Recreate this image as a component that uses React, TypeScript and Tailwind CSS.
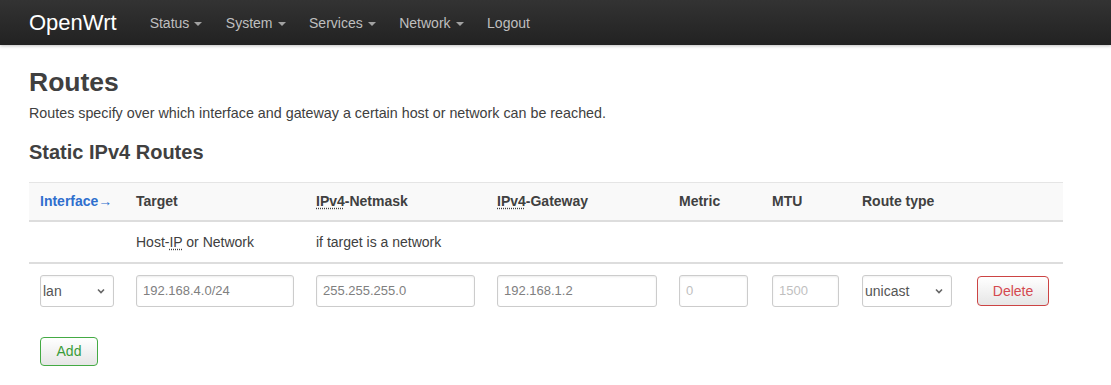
import React from "react";

const font = { fontFamily: '"Liberation Sans", Arial, sans-serif' };

function Caret() {
  return (
    <span className="ml-[5px] inline-block h-0 w-0 border-x-[4px] border-t-[4px] border-x-transparent border-t-[#bfbfbf] align-middle opacity-80" />
  );
}

function Chevron() {
  return (
    <svg width="10" height="10" viewBox="0 0 10 10" className="shrink-0">
      <path d="M2 3.5 L5 6.5 L8 3.5" fill="none" stroke="#666" strokeWidth="1.6" />
    </svg>
  );
}

function Select({ value }: { value: string }) {
  return (
    <div className="flex h-[32px] w-full items-center justify-between rounded-[3px] border border-[#ccc] bg-white pl-[2px] pr-[7px] text-[14px] text-[#555] shadow-[inset_0_1px_2px_rgba(0,0,0,0.05)]">
      <span>{value}</span>
      <Chevron />
    </div>
  );
}

function Input({ value, placeholder }: { value?: string; placeholder?: string }) {
  return (
    <div className="flex h-[32px] w-full items-center rounded-[3px] border border-[#ccc] bg-white px-[6px] text-[13px] shadow-[inset_0_1px_2px_rgba(0,0,0,0.08)]">
      {value ? (
        <span className="text-[#808080]">{value}</span>
      ) : (
        <span className="text-[#bfbfbf]">{placeholder}</span>
      )}
    </div>
  );
}

function Abbr({ children }: { children: React.ReactNode }) {
  return <span className="underline decoration-dotted decoration-[#404040] underline-offset-[2px]">{children}</span>;
}

export default function App() {
  const cols = "grid grid-cols-[96px_180px_181px_182px_93px_90px_115px_97px]";
  return (
    <div className="min-h-[385px] bg-white text-[#404040]" style={font}>
      <div className="flex h-[45px] items-center bg-gradient-to-b from-[#333] to-[#222] pl-[29px] shadow-[0_1px_3px_rgba(0,0,0,0.25)]">
        <span className="text-[22px] leading-none text-white">OpenWrt</span>
        <nav className="ml-[23px] flex items-center pt-[1px] text-[14px] text-[#bfbfbf]">
          <span className="px-[10px]">Status<Caret /></span>
          <span className="ml-[3.5px] px-[10px]">System<Caret /></span>
          <span className="ml-[3.5px] px-[10px]">Services<Caret /></span>
          <span className="ml-[3.5px] px-[10px]">Network<Caret /></span>
          <span className="ml-[3.5px] px-[10px]">Logout</span>
        </nav>
      </div>

      <div className="pl-[29px]">
        <h2 className="mt-[21px] text-[26.5px] font-bold leading-[32px] text-[#404040]">Routes</h2>
        <p className="mt-[5px] text-[14.3px] leading-[20px]">
          Routes specify over which interface and gateway a certain host or network can be reached.
        </p>
        <h3 className="mt-[17px] text-[20px] font-bold leading-[24px]">Static IPv4 Routes</h3>

        <div className="mt-[18px] w-[1034px] text-[14px]">
          <div className={`${cols} h-[40px] items-center border-t border-b-2 border-t-[#e5e5e5] border-b-[#ddd] bg-[#f9f9f9] font-bold`}>
            <div className="px-[11px] text-[#2f6fce]">Interface<span className="font-normal">→</span></div>
            <div className="px-[11px]">Target</div>
            <div className="px-[11px]"><Abbr>IPv4</Abbr>-Netmask</div>
            <div className="px-[11px]"><Abbr>IPv4</Abbr>-Gateway</div>
            <div className="px-[11px]">Metric</div>
            <div className="px-[11px]">MTU</div>
            <div className="px-[11px]">Route type</div>
            <div />
          </div>
          <div className={`${cols} h-[42px] items-center border-b-2 border-b-[#ddd]`}>
            <div />
            <div className="px-[11px]">Host-<Abbr>IP</Abbr> or Network</div>
            <div className="px-[11px]">if target is a network</div>
            <div />
            <div />
            <div />
            <div />
            <div />
          </div>
          <div className={`${cols} items-center pt-[11px]`}>
            <div className="px-[11px]"><Select value="lan" /></div>
            <div className="px-[11px]"><Input value="192.168.4.0/24" /></div>
            <div className="px-[11px]"><Input value="255.255.255.0" /></div>
            <div className="px-[11px]"><Input value="192.168.1.2" /></div>
            <div className="pl-[11px] pr-[13px]"><Input placeholder="0" /></div>
            <div className="pl-[11px] pr-[12px]"><Input placeholder="1500" /></div>
            <div className="pl-[11px] pr-[14px]"><Select value="unicast" /></div>
            <div className="pl-[11px] pr-[14px]">
              <div className="flex h-[30px] w-[72px] items-center justify-center rounded-[4px] border border-[#c44] bg-gradient-to-b from-white to-[#e6e6e6] text-[14px] text-[#d4494f]">
                Delete
              </div>
            </div>
          </div>
        </div>

        <div className="mt-[30px] pl-[11px]">
          <div className="flex h-[29px] w-[58px] items-center justify-center rounded-[4px] border border-[#4a4] bg-gradient-to-b from-white to-[#e6e6e6] text-[14px] text-[#3a9c3a]">
            Add
          </div>
        </div>
      </div>
    </div>
  );
}
